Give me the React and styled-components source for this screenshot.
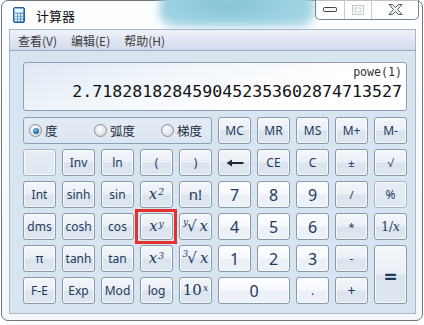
import React from "react"
import styled, { createGlobalStyle } from "styled-components"

const GlobalStyle = createGlobalStyle`
  html, body {
    margin: 0;
    padding: 0;
    background: #ffffff;
  }
  body {
    font-family: "Noto Sans", "Noto Sans CJK SC", sans-serif;
  }
`

const CJK = `"Noto Sans CJK SC", "Noto Sans", sans-serif`
const UI = `"Noto Sans", "Open Sans", sans-serif`
const MATH = `"DejaVu Serif", "Liberation Serif", serif`

const Frame = styled.div`
  position: relative;
  box-sizing: border-box;
  width: 422px;
  height: 321px;
  margin-left: 1px;
  border: 1px solid #6f747a;
  border-radius: 7px;
  background: linear-gradient(to bottom, #fdfeff, #f4f8fb);
  display: flex;
  flex-direction: column;
  padding: 0 6px 6px 7px;
`

const TitleBar = styled.div`
  position: relative;
  height: 28px;
  display: flex;
  align-items: center;
  gap: 11px;
  padding-left: 4px;
`

const Glow = styled.div`
  position: absolute;
  left: 150px;
  top: -10px;
  width: 156px;
  height: 36px;
  border-radius: 16px;
  background: radial-gradient(ellipse at 45% 40%, #84c3d6 0%, #98cfdf 45%, #b4dde9 100%);
  filter: blur(4px);
`

const TitleIcon = styled.svg`
  position: relative;
`

const Title = styled.span`
  position: relative;
  font-family: ${CJK};
  font-size: 13px;
  color: #111;
  margin-top: 1px;
`

const Controls = styled.div`
  position: absolute;
  top: -1px;
  right: 3px;
  display: flex;
  height: 19px;
  border: 1px solid #7a8594;
  border-top: none;
  border-radius: 0 0 5px 5px;
  background: rgba(255, 255, 255, 0.55);
  overflow: hidden;
`

const Ctrl = styled.div`
  width: ${(p) => p.$w}px;
  display: flex;
  align-items: center;
  justify-content: center;
  border-left: ${(p) => (p.$first ? "none" : "1px solid #c3cad3")};
`

const MenuBar = styled.div`
  position: relative;
  height: 20px;
  display: flex;
  align-items: center;
  gap: 14px;
  padding-left: 8px;
  border: 1px solid #a9b4c4;
  border-bottom: 1px solid #9aa6ba;
  background: linear-gradient(to bottom, #eef2fa, #dde3f0 60%, #d3dbeb);
`

const MenuItem = styled.span`
  font-family: ${CJK};
  font-size: 12px;
  color: #3a3a3a;
`

const Panel = styled.div`
  flex: 1;
  display: flex;
  flex-direction: column;
  gap: 6px;
  padding: 11px 10px 0 13px;
  background: #d9e4f1;
  border: 1px solid #a9b4c4;
  border-top: none;
`

const Display = styled.div`
  box-sizing: border-box;
  height: 49px;
  width: 384px;
  border: 1px solid #8e9fb5;
  border-radius: 3px;
  background: linear-gradient(160deg, #dfe9f5 0%, #f4f8fc 40%, #ffffff 70%);
  display: flex;
  flex-direction: column;
  align-items: flex-end;
  padding: 2px 4px 0 0;
  font-family: "DejaVu Sans Mono", "Liberation Mono", monospace;
  color: #111;
`

const Expr = styled.div`
  font-size: 11.6px;
  line-height: 15px;
  color: #333;
`

const Value = styled.div`
  font-size: 16.6px;
  line-height: 24px;
`

const Keypad = styled.div`
  display: grid;
  grid-template-columns: repeat(10, 33px);
  grid-auto-rows: 27px;
  column-gap: 6px;
  row-gap: 5px;
`

const RadioGroup = styled.div`
  grid-column: 1 / 6;
  box-sizing: border-box;
  border: 1px solid #8e9fb5;
  border-radius: 3px;
  background: linear-gradient(to bottom, #e3ebf5, #dce6f2);
  display: flex;
  align-items: center;
  padding-left: 5px;
`

const RadioItem = styled.label`
  display: flex;
  align-items: center;
  gap: 3px;
  width: ${(p) => p.$w}px;
  font-family: ${CJK};
  font-size: 12.5px;
  color: #1e2a3a;
`

const Dot = styled.span`
  box-sizing: border-box;
  width: 13px;
  height: 13px;
  border-radius: 50%;
  border: 1px solid #8b8f96;
  background: radial-gradient(circle at 40% 35%, #ffffff, #d8dbe0 75%);
  display: flex;
  align-items: center;
  justify-content: center;
  &::after {
    content: "";
    display: ${(p) => (p.$on ? "block" : "none")};
    width: 6px;
    height: 6px;
    border-radius: 50%;
    background: radial-gradient(circle at 40% 35%, #7fc3f0, #1a5e9a 70%);
  }
`

const Key = styled.button`
  position: relative;
  box-sizing: border-box;
  margin: 0;
  padding: 0;
  grid-column: ${(p) => (p.$wide ? "span 2" : "auto")};
  grid-row: ${(p) => (p.$tall ? "span 2" : "auto")};
  border: 1px solid ${(p) => (p.$flat ? "#a6b3c4" : "#8898ae")};
  border-radius: 3px;
  box-shadow: inset 0 0 0 1px rgba(255, 255, 255, 0.75);
  background: ${(p) =>
    p.$num
      ? "linear-gradient(to bottom, #fdfeff 0%, #f5f8fc 48%, #ebf0f7 52%, #eef2f8 100%)"
      : p.$flat
      ? "linear-gradient(to bottom, #e6edf5, #dfe7f1)"
      : "linear-gradient(to bottom, #f3f6fa 0%, #ebf0f6 48%, #dbe3ee 52%, #dee6f0 100%)"};
  color: #1e395b;
  font-family: ${(p) => (p.$math ? MATH : UI)};
  font-style: ${(p) => (p.$math ? "italic" : "normal")};
  font-size: ${(p) => p.$size || 12}px;
  font-weight: ${(p) => p.$weight || 400};
  display: flex;
  align-items: center;
  justify-content: center;
  line-height: 1;
  cursor: default;
  sup {
    font-size: 0.62em;
    position: relative;
    top: -0.35em;
    vertical-align: top;
    margin-left: 1px;
  }
  &::after {
    content: "";
    display: ${(p) => (p.$marked ? "block" : "none")};
    position: absolute;
    left: -6px;
    right: -5px;
    top: -5px;
    bottom: -5px;
    border: 3px solid #e3322b;
  }
`

const Idx = styled.span`
  font-size: 9px;
  align-self: flex-start;
  margin-top: 4px;
  margin-right: -1px;
`

const Radical = styled.span`
  font-style: normal;
  margin-right: 3px;
`

const RootedX = ({ idx }) => (
  <>
    <Idx>{idx}</Idx>
    <Radical>√</Radical>
    <span>x</span>
  </>
)

const Back = () => (
  <svg width="18" height="8" viewBox="0 0 18 8">
    <path d="M0.5 4 L6 0.5 L6 3 L17.5 3 L17.5 5 L6 5 L6 7.5 Z" fill="#1e2a3a" />
  </svg>
)

const App = () => {
  return (
    <>
      <GlobalStyle />
      <Frame>
        <TitleBar>
          <Glow />
          <TitleIcon width="12" height="16" viewBox="0 0 12 16">
            <defs>
              <linearGradient id="cg" x1="0" y1="0" x2="1" y2="1">
                <stop offset="0" stopColor="#9fd0f2" />
                <stop offset="1" stopColor="#2f6fb0" />
              </linearGradient>
            </defs>
            <rect x="0.5" y="0.5" width="11" height="15" rx="1.5" fill="url(#cg)" stroke="#2b5d93" />
            <rect x="2" y="2" width="8" height="3.5" fill="#e8f4fc" />
            {[0, 1, 2].map((r) =>
              [0, 1, 2].map((c) => (
                <rect key={`${r}${c}`} x={2 + c * 3} y={7 + r * 2.7} width="2" height="1.8" fill="#eaf4fb" />
              ))
            )}
          </TitleIcon>
          <Title>计算器</Title>
        </TitleBar>
        <Controls>
          <Ctrl $w={28} $first>
            <svg width="14" height="5" viewBox="0 0 14 5">
              <rect x="0.5" y="0.5" width="13" height="4" rx="1" fill="#f4f6f8" stroke="#3d4450" />
            </svg>
          </Ctrl>
          <Ctrl $w={26}>
            <svg width="12" height="10" viewBox="0 0 12 10">
              <rect x="0.5" y="0.5" width="11" height="9" fill="none" stroke="#c2c7ce" />
              <rect x="3" y="3" width="6" height="4" fill="none" stroke="#c8cdd4" />
            </svg>
          </Ctrl>
          <Ctrl $w={46}>
            <svg width="15" height="11" viewBox="0 0 15 11">
              <path
                d="M1 0.5 H4.5 L7.5 3.5 L10.5 0.5 H14 L9.5 5.5 L14 10.5 H10.5 L7.5 7.5 L4.5 10.5 H1 L5.5 5.5 Z"
                fill="#f3f5f7"
                stroke="#4a525d"
                strokeLinejoin="round"
              />
            </svg>
          </Ctrl>
        </Controls>
        <MenuBar>
          <MenuItem>查看(V)</MenuItem>
          <MenuItem>编辑(E)</MenuItem>
          <MenuItem>帮助(H)</MenuItem>
        </MenuBar>
        <Panel>
          <Display>
            <Expr>powe(1)</Expr>
            <Value>2.7182818284590452353602874713527</Value>
          </Display>
          <Keypad>
            <RadioGroup>
              <RadioItem $w={65}>
                <Dot $on />度
              </RadioItem>
              <RadioItem $w={67}>
                <Dot />弧度
              </RadioItem>
              <RadioItem $w={50}>
                <Dot />梯度
              </RadioItem>
            </RadioGroup>
            <Key>MC</Key>
            <Key>MR</Key>
            <Key>MS</Key>
            <Key>M+</Key>
            <Key>M-</Key>

            <Key $flat />
            <Key>Inv</Key>
            <Key>ln</Key>
            <Key>(</Key>
            <Key>)</Key>
            <Key><Back /></Key>
            <Key>CE</Key>
            <Key>C</Key>
            <Key $size={11}>±</Key>
            <Key $size={11}>√</Key>

            <Key>Int</Key>
            <Key>sinh</Key>
            <Key>sin</Key>
            <Key $math $size={15}>x<sup>2</sup></Key>
            <Key $size={15}>n!</Key>
            <Key $num $size={16}>7</Key>
            <Key $num $size={16}>8</Key>
            <Key $num $size={16}>9</Key>
            <Key $size={11}>/</Key>
            <Key $flat>%</Key>

            <Key>dms</Key>
            <Key>cosh</Key>
            <Key>cos</Key>
            <Key $math $size={15} $marked>x<sup>y</sup></Key>
            <Key $math $size={15}><RootedX idx="y" /></Key>
            <Key $num $size={16}>4</Key>
            <Key $num $size={16}>5</Key>
            <Key $num $size={16}>6</Key>
            <Key $size={11}>*</Key>
            <Key $size={12}>
              <span style={{ fontFamily: MATH }}>1/</span>
              <span style={{ fontFamily: MATH, fontStyle: "italic" }}>x</span>
            </Key>

            <Key>π</Key>
            <Key>tanh</Key>
            <Key>tan</Key>
            <Key $math $size={15}>x<sup>3</sup></Key>
            <Key $math $size={15}><RootedX idx="3" /></Key>
            <Key $num $size={16}>1</Key>
            <Key $num $size={16}>2</Key>
            <Key $num $size={16}>3</Key>
            <Key $size={12}>-</Key>
            <Key $tall $size={22} $weight={700}>=</Key>

            <Key>F-E</Key>
            <Key>Exp</Key>
            <Key>Mod</Key>
            <Key>log</Key>
            <Key $size={15} style={{ fontFamily: MATH }}>10<sup style={{ fontStyle: "italic" }}>x</sup></Key>
            <Key $num $wide $size={16}>0</Key>
            <Key $num $size={12}>.</Key>
            <Key $size={14}>+</Key>
          </Keypad>
        </Panel>
      </Frame>
    </>
  )
}

export default App
